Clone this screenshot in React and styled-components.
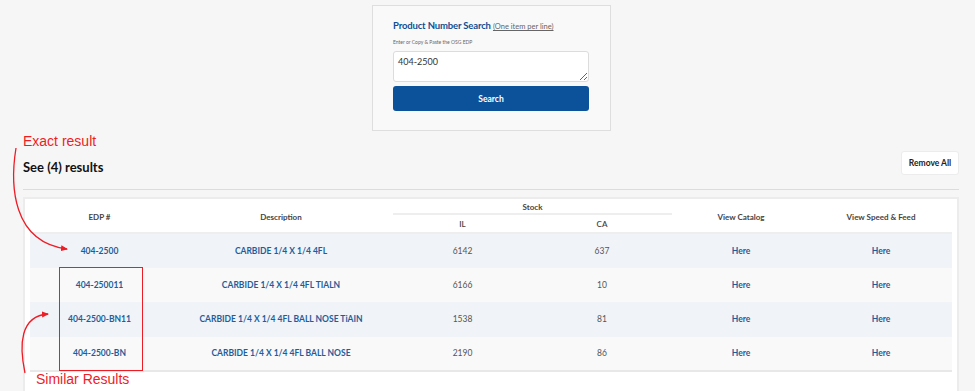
import React from "react";
import styled, { createGlobalStyle } from "styled-components";

const rows = [
  { edp: "404-2500", desc: "CARBIDE 1/4 X 1/4 4FL", il: 6142, ca: 637 },
  { edp: "404-250011", desc: "CARBIDE 1/4 X 1/4 4FL TIALN", il: 6166, ca: 10 },
  { edp: "404-2500-BN11", desc: "CARBIDE 1/4 X 1/4 4FL BALL NOSE TiAIN", il: 1538, ca: 81 },
  { edp: "404-2500-BN", desc: "CARBIDE 1/4 X 1/4 4FL BALL NOSE", il: 2190, ca: 86 },
];

export default function App() {
  return (
    <Page>
      <GlobalStyle />
      <SearchWrap>
        <SearchCard>
          <Title>
            Product Number Search <Hint>(One item per line)</Hint>
          </Title>
          <SubLabel>Enter or Copy &amp; Paste the OSG EDP</SubLabel>
          <Input defaultValue="404-2500" />
          <SearchButton>Search</SearchButton>
        </SearchCard>
      </SearchWrap>

      <Results>
        <ResultsHead>
          <Count>See (4) results</Count>
          <RemoveButton>Remove All</RemoveButton>
        </ResultsHead>
        <Rule />
        <TableBox>
          <Table>
            <colgroup>
              <col style={{ width: 139 }} />
              <col style={{ width: 224 }} />
              <col style={{ width: 139 }} />
              <col style={{ width: 140 }} />
              <col style={{ width: 138 }} />
              <col />
            </colgroup>
            <thead>
              <tr>
                <Th rowSpan={2}>EDP #</Th>
                <Th rowSpan={2}>Description</Th>
                <Th colSpan={2} $group>Stock</Th>
                <Th rowSpan={2}>View Catalog</Th>
                <Th rowSpan={2}>View Speed &amp; Feed</Th>
              </tr>
              <tr>
                <Th $sub>IL</Th>
                <Th $sub>CA</Th>
              </tr>
            </thead>
            <tbody>
              {rows.map((r, i) => (
                <Row key={r.edp} $odd={i % 2 === 0}>
                  <LinkCell>{r.edp}</LinkCell>
                  <LinkCell>{r.desc}</LinkCell>
                  <NumCell>{r.il}</NumCell>
                  <NumCell>{r.ca}</NumCell>
                  <LinkCell>Here</LinkCell>
                  <LinkCell>Here</LinkCell>
                </Row>
              ))}
            </tbody>
          </Table>
        </TableBox>
      </Results>

      {/* annotations drawn on top of the screenshot */}
      <Note style={{ left: 23, top: 133 }}>Exact result</Note>
      <Note style={{ left: 36, top: 371 }}>Similar Results</Note>
      <Highlight />
      <Arrows width="975" height="391" viewBox="0 0 975 391">
        <defs>
          <marker id="head" markerWidth="8" markerHeight="8" refX="6" refY="4" orient="auto" markerUnits="userSpaceOnUse">
            <path d="M0 1 L7 4 L0 7 Z" fill="#ee1c25" />
          </marker>
        </defs>
        <path d="M16 148 C 10 185, 12 242, 67 249" stroke="#ee1c25" strokeWidth="1.3" fill="none" markerEnd="url(#head)" />
        <path d="M25 373 C 19 345, 20 316, 48 314" stroke="#ee1c25" strokeWidth="1.3" fill="none" markerEnd="url(#head)" />
      </Arrows>
    </Page>
  );
}

const GlobalStyle = createGlobalStyle`
  html, body {
    margin: 0;
    background: #f6f6f6;
    font-family: Lato, "Open Sans", sans-serif;
  }
`;

const Page = styled.div`
  position: relative;
  width: 975px;
  height: 391px;
  overflow: hidden;
  background: #f6f6f6;
`;

const SearchWrap = styled.div`
  display: flex;
  justify-content: center;
  padding: 5px 0 0 8px;
`;

const SearchCard = styled.div`
  box-sizing: border-box;
  width: 239px;
  height: 126px;
  padding: 14px 20px 0 20px;
  background: #f9f9f9;
  border: 1px solid #dedede;
  display: flex;
  flex-direction: column;
`;

const Title = styled.div`
  font-size: 9.5px;
  font-weight: 700;
  color: #0d4f95;
  letter-spacing: -0.15px;
  white-space: nowrap;
`;

const Hint = styled.span`
  font-size: 7.5px;
  font-weight: 400;
  color: #666;
  text-decoration: underline;
  letter-spacing: 0;
`;

const SubLabel = styled.div`
  margin-top: 8px;
  font-size: 5px;
  color: #666;
`;

const Input = styled.textarea`
  box-sizing: border-box;
  margin-top: 6px;
  width: 196px;
  height: 31px;
  padding: 4px 4px;
  border: 1px solid #dcdcdc;
  border-radius: 3px;
  background: #fff;
  font-family: Lato, sans-serif;
  font-size: 9px;
  color: #333;
  resize: vertical;
  outline: none;
`;

const SearchButton = styled.button`
  margin-top: 4px;
  width: 196px;
  height: 25px;
  border: none;
  border-radius: 3px;
  background: #0b529b;
  color: #fff;
  font-family: Lato, sans-serif;
  font-weight: 700;
  font-size: 8.5px;
`;

const Results = styled.div`
  padding: 20px 16px 0 23px;
`;

const ResultsHead = styled.div`
  display: flex;
  align-items: center;
  justify-content: space-between;
  height: 24px;
`;

const Count = styled.div`
  font-size: 13px;
  font-weight: 700;
  color: #111;
  padding-top: 8px;
`;

const RemoveButton = styled.button`
  box-sizing: border-box;
  width: 58px;
  height: 24px;
  padding: 0;
  background: #fff;
  border: 1px solid #ececec;
  border-radius: 3px;
  font-family: Lato, sans-serif;
  font-weight: 700;
  font-size: 8.5px;
  color: #222;
`;

const Rule = styled.div`
  margin-top: 14px;
  height: 1px;
  background: #dcdcdc;
`;

const TableBox = styled.div`
  margin-top: 7px;
  padding: 2px 5px 40px 5px;
  background: #fff;
  border: 2px solid #ececec;
  border-bottom: none;
`;

const Table = styled.table`
  width: 100%;
  border-collapse: collapse;
  table-layout: fixed;
`;

const Th = styled.th`
  font-size: 8px;
  font-weight: 700;
  color: #444;
  text-align: center;
  padding: 0;
  height: ${(p) => (p.$group ? "12px" : p.$sub ? "17px" : "auto")};
  border-bottom: 2px solid #eeeeee;
  line-height: 1;
  ${(p) => p.$sub && "font-weight: 600;"}
`;

const Row = styled.tr`
  height: 34.5px;
  background: ${(p) => (p.$odd ? "#f0f3f7" : "#f9f9f9")};
  &:last-child td {
    border-bottom: 2px solid #e8e8e8;
  }
`;

const LinkCell = styled.td`
  text-align: center;
  font-size: 8.5px;
  font-weight: 700;
  color: #1d5d9b;
  padding: 0;
`;

const NumCell = styled.td`
  text-align: center;
  font-size: 8.5px;
  color: #555;
  padding: 0;
`;

const Note = styled.div`
  position: absolute;
  font-family: "Liberation Sans", Arial, sans-serif;
  font-size: 14px;
  color: #ee1c25;
  white-space: nowrap;
`;

const Highlight = styled.div`
  position: absolute;
  left: 59px;
  top: 267px;
  width: 82px;
  height: 102px;
  border: 1.5px solid #ee1c25;
`;

const Arrows = styled.svg`
  position: absolute;
  left: 0;
  top: 0;
  pointer-events: none;
`;
